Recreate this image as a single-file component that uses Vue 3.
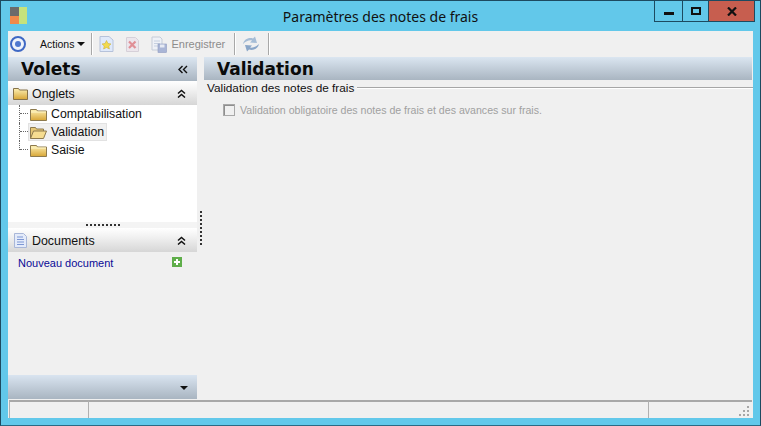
<script setup>
const rows = [
  { label: 'Comptabilisation', open: false },
  { label: 'Validation', open: true },
  { label: 'Saisie', open: false },
]
</script>

<template>
  <div class="window">
    <header class="titlebar">
      <svg class="appicon" width="17" height="17" viewBox="0 0 17 17">
        <rect x="0" y="0" width="9" height="9" fill="#6b6b6b" />
        <rect x="0" y="9" width="9" height="8" fill="#f08a4b" />
        <rect x="9" y="0" width="8" height="17" fill="#c6e27c" />
      </svg>
      <div class="title">Paramètres des notes de frais</div>
      <div class="winbtns">
        <div class="wb wb-min"><i></i></div>
        <div class="wb wb-max"><i></i></div>
        <div class="wb wb-close">
          <svg width="10" height="9" viewBox="0 0 10 9"><path d="M1 .5l8 8M9 .5l-8 8" stroke="#111" stroke-width="2.2" fill="none" /></svg>
        </div>
      </div>
    </header>

    <div class="client">
      <div class="toolbar">
        <svg class="tb-logo" width="18" height="18" viewBox="0 0 18 18">
          <circle cx="9" cy="9" r="7" fill="#eef3fb" stroke="#3f68c4" stroke-width="2" />
          <circle cx="9" cy="9" r="3" fill="#4f78cf" />
        </svg>
        <span class="actions">Actions</span>
        <span class="caret"></span>
        <span class="sep s1"></span>
        <svg class="t-new" width="15" height="16" viewBox="0 0 15 16">
          <path d="M1 .5h9l4 3.500v11.500H1z" fill="#dfe9fa" stroke="#b6c2da" />
          <path d="M7.500 4.500l1.500 3 3 .4-2.200 2.100.6 3-2.900-1.500-2.900 1.500.6-3L3 7.900l3-.4z" fill="#f2da4c" stroke="#c9a92c" stroke-width=".5" />
        </svg>
        <svg class="t-del" width="13" height="15" viewBox="0 0 13 15">
          <path d="M.5.500h9l3 3v11H.500z" fill="#ece6ec" stroke="#d6d0d8" />
          <path d="M3 4.500l6.500 6.500M9.500 4.500L3 11" stroke="#e08f96" stroke-width="2.200" />
        </svg>
        <svg class="t-save" width="16" height="17" viewBox="0 0 16 17">
          <path d="M1 1h8l2 2v11H1z" fill="#eef1f7" stroke="#c5ccd8" />
          <path d="M3 5h6M3 7.500h6M3 10h4" stroke="#c6d0e0" />
          <rect x="7" y="8" width="8.500" height="8.500" fill="#a9b5d6" stroke="#8f9cc0" stroke-width=".6" />
          <rect x="9" y="8.500" width="4.500" height="3" fill="#e6eaf3" />
        </svg>
        <span class="save">Enregistrer</span>
        <span class="sep s2"></span>
        <svg class="t-ref" width="18" height="18" viewBox="0 0 18 18">
          <path d="M1 9c1-4.500 5.500-7 10-5.500l2-2 2 6.500-7-.5 2-2c-3-.6-6 .8-9 3.500z" fill="#a6bdd6" />
          <path d="M17 9c-1 4.500-5.500 7-10 5.500l-2 2-2-6.500 7 .5-2 2c3 .6 6-.8 9-3.500z" fill="#8aa6c8" />
        </svg>
        <span class="sep s3"></span>
      </div>

      <div class="body">
        <aside class="side">
          <div class="bighead">
            <span class="bigtitle side-title">Volets</span>
            <svg class="dbl" width="10" height="9" viewBox="0 0 10 9"><path d="M4.500 1L1 4.500 4.500 8M9 1L5.500 4.500 9 8" fill="none" stroke="#111" stroke-width="1.400" /></svg>
          </div>

          <div class="sechead">
            <svg class="sec-ic" width="15" height="13" viewBox="0 0 15 13">
              <defs><linearGradient id="fa" x1="0" y1="0" x2="0" y2="1"><stop offset="0" stop-color="#fdf0b4" /><stop offset="1" stop-color="#d8a636" /></linearGradient></defs>
              <path d="M.5 1.500h5l1 1.500h8v9.500H.5z" fill="url(#fa)" stroke="#86724a" />
            </svg>
            <span class="sec-label">Onglets</span>
            <svg class="chev" width="9" height="9" viewBox="0 0 9 9"><path d="M1 4.500l3.500-3 3.500 3M1 8.500l3.500-3 3.500 3" fill="none" stroke="#111" stroke-width="1.500" /></svg>
          </div>

          <div class="tree">
            <div v-for="(r, i) in rows" :key="r.label" class="row">
              <span class="conn" :class="{ last: i === rows.length - 1 }"><i></i></span>
              <div class="node" :class="{ sel: r.open }">
                <svg v-if="!r.open" width="17" height="13" viewBox="0 0 17 13">
                  <path d="M.5 1.500h6l1 1.500h9v9.500H.5z" fill="url(#fa)" stroke="#8d7a4e" />
                  <path d="M1 4h15" stroke="#fff6c8" />
                </svg>
                <svg v-else width="17" height="13" viewBox="0 0 17 13">
                  <path d="M.5 12.500v-11h5l1 1.500h7v2" fill="#e6c877" stroke="#8d7a4e" />
                  <path d="M.5 12.500l3-7.500h13l-3 7.500z" fill="#f6dd91" stroke="#8d7a4e" />
                </svg>
                <span class="node-label">{{ r.label }}</span>
              </div>
            </div>
          </div>

          <div class="hgrip"><span></span></div>

          <div class="sechead">
            <svg class="sec-ic doc" width="13" height="15" viewBox="0 0 13 15">
              <path d="M.5.500h9l3 3v11H.500z" fill="#e4ebfa" stroke="#a9b7d8" />
              <path d="M3 4h6M3 6.500h7M3 9h7M3 11.500h7" stroke="#7d97d4" />
            </svg>
            <span class="sec-label">Documents</span>
            <svg class="chev" width="9" height="9" viewBox="0 0 9 9"><path d="M1 4.500l3.500-3 3.500 3M1 8.500l3.500-3 3.500 3" fill="none" stroke="#111" stroke-width="1.500" /></svg>
          </div>

          <div class="docs">
            <span class="doclink">Nouveau document</span>
            <svg width="10" height="10" viewBox="0 0 10 10">
              <rect width="10" height="10" fill="#5fae4a" />
              <path d="M5 2v6M2 5h6" stroke="#fff" stroke-width="2" />
            </svg>
          </div>

          <div class="sidefoot"><span class="caret footcaret"></span></div>
        </aside>

        <div class="vgrip"><span></span></div>

        <main class="main">
          <div class="bighead mainhead">
            <span class="bigtitle">Validation</span>
          </div>
          <div class="group">
            <span class="group-label">Validation des notes de frais</span>
            <span class="group-line"></span>
          </div>
          <label class="check">
            <span class="box"></span>
            <span>Validation obligatoire des notes de frais et des avances sur frais.</span>
          </label>
        </main>
      </div>

      <footer class="status">
        <div class="cell c1"></div>
        <div class="cell c2"></div>
        <div class="cell c3">
          <svg width="11" height="11" viewBox="0 0 11 11" fill="#a6a6a6">
            <rect x="8" y="0" width="2" height="2" /><rect x="4" y="4" width="2" height="2" /><rect x="8" y="4" width="2" height="2" />
            <rect x="0" y="8" width="2" height="2" /><rect x="4" y="8" width="2" height="2" /><rect x="8" y="8" width="2" height="2" />
          </svg>
        </div>
      </footer>
    </div>
  </div>
</template>

<style>
html, body { margin: 0; padding: 0; }
</style>

<style scoped>
.window {
  width: 761px; height: 426px; box-sizing: border-box;
  background: #62c8ea; border: 1px solid #1d4a60; border-bottom-color: #2a6a84;
  display: flex; flex-direction: column; overflow: hidden;
  font-family: "Liberation Sans", sans-serif; color: #111;
}
.titlebar { height: 30px; flex: none; display: flex; align-items: flex-start; padding-left: 9px; }
.appicon { margin-top: 6px; flex: none; }
.title { position: absolute; left: 0; width: 761px; top: 7px; text-align: center; font-family: "Noto Sans", sans-serif; font-size: 14px; line-height: 20px; color: #111; }
.winbtns { margin-left: auto; margin-right: 5px; display: flex; height: 21px; border: 1px solid #1d4a60; border-top: 0; box-sizing: border-box; position: relative; }
.wb { display: flex; align-items: center; justify-content: center; height: 20px; box-sizing: border-box; }
.wb-min { width: 28px; border-right: 1px solid #1d4a60; }
.wb-min i { width: 10px; height: 3px; background: #111; margin-top: 5px; }
.wb-max { width: 26px; border-right: 1px solid #1d4a60; }
.wb-max i { width: 6px; height: 4px; border: 2px solid #111; }
.wb-close { width: 45px; background: #c75e4f; }

.client { flex: 1; min-height: 0; margin: 0 7px 7px; background: #f0f0f0; display: flex; flex-direction: column; }
.toolbar { height: 26px; flex: none; display: flex; align-items: center; padding-left: 1px; font-size: 11px; }
.tb-logo { flex: none; }
.actions { margin-left: 13px; color: #111; font-size: 10.500px; }
.caret { width: 0; height: 0; border: 4px solid transparent; border-top: 4px solid #111; border-bottom: 0; margin-left: 3px; }
.sep { width: 1px; height: 22px; background: #a8a8a8; border-right: 1px solid #fff; flex: none; }
.s1 { margin-left: 6px; }
.t-new { margin-left: 6px; }
.t-del { margin-left: 12px; }
.t-save { margin-left: 12px; }
.save { margin-left: 4px; color: #8c8c8c; }
.s2 { margin-left: 9px; }
.t-ref { margin-left: 6px; }
.s3 { margin-left: 8px; }

.body { flex: 1; min-height: 0; display: flex; }
.side { width: 189px; flex: none; display: flex; flex-direction: column; }
.bighead {
  height: 24px; flex: none; display: flex; align-items: center; justify-content: space-between;
  background: linear-gradient(#dbe6f1, #a9b5c1);
}
.mainhead { height: 23px; }
.bigtitle { font-family: "DejaVu Sans", sans-serif; font-weight: 700; font-size: 17px; line-height: 22px; color: #0a0a0a; margin-left: 13px; }
.side-title { margin-left: 13px; }
.dbl { margin-right: 9px; }

.sechead { height: 24px; flex: none; display: flex; align-items: center; background: linear-gradient(#ffffff, #f2f2f2 35%, #d6d6d6); font-size: 12.400px; }
.sec-ic { margin-left: 5px; flex: none; }
.sec-ic.doc { margin-left: 6px; margin-right: 1px; }
.sec-label { margin-left: 4px; flex: 1; padding-top: 1px; }
.chev { margin-right: 11px; }

.tree { height: 117px; flex: none; background: #fff; font-size: 12.300px; box-sizing: border-box; }
.row { height: 18px; display: flex; align-items: center; padding-left: 11px; }
.conn { width: 9px; height: 18px; border-left: 1px dotted #666; flex: none; box-sizing: border-box; }
.conn.last { height: 9px; align-self: flex-start; }
.conn i { display: block; height: 9px; box-sizing: border-box; border-bottom: 1px dotted #666; }
.node { display: flex; align-items: center; gap: 4px; height: 18px; box-sizing: border-box; padding: 0 2px 0 1px; border: 1px solid transparent; }
.node.sel { background: #f0f0f0; border-color: #e2e2e2; }
.node-label { line-height: 16px; }

.hgrip { height: 6px; flex: none; display: flex; justify-content: center; align-items: flex-start; background: #f4f4f4; }
.hgrip span { width: 34px; height: 2px; margin-top: 2px; border-top: 2px dotted #333; box-sizing: border-box; }

.docs { height: 123px; flex: none; box-sizing: border-box; padding: 4px 15px 0 10px; display: flex; justify-content: space-between; align-items: flex-start; font-size: 11px; }
.doclink { color: #0a0a96; line-height: 14px; }
.docs svg { margin-top: 1px; }

.sidefoot { height: 24px; flex: none; background: linear-gradient(#d9e4f0, #a9b5c1); display: flex; align-items: center; justify-content: flex-end; padding-right: 9px; box-sizing: border-box; }
.footcaret { margin: 2px 0 0; }

.vgrip { width: 7px; flex: none; display: flex; justify-content: center; padding-top: 154px; box-sizing: border-box; }
.vgrip span { width: 0; height: 34px; border-left: 2px dotted #333; }

.main { flex: 1; min-width: 0; padding-right: 1px; }
.group { display: flex; align-items: center; margin: 0 -1px 0 3px; height: 16px; font-size: 11.800px; }
.group-label { line-height: 16px; margin-top: -1px; }
.group-line { flex: 1; height: 1px; background: #a6a6a6; border-bottom: 1px solid #fff; margin-left: 3px; }
.check { display: flex; align-items: center; margin: 6px 0 0 19px; font-size: 10.600px; color: #a0a0a0; gap: 5px; line-height: 16px; }
.box { width: 10px; height: 10px; border: 1px solid #a8a8a8; background: #f0f0f0; box-shadow: inset 1px 1px 0 #8e8e8e; flex: none; }

.status { height: 19px; flex: none; display: flex; box-sizing: border-box; padding: 1px 1px 0 1px; }
.cell { height: 18px; border-top: 2px solid #a8a8a8; border-left: 1px solid #b0b0b0; box-sizing: border-box; background: #f0f0f0; }
.c1 { width: 79px; }
.c2 { flex: 1; }
.c3 { width: 104px; display: flex; justify-content: flex-end; align-items: flex-end; padding: 0 2px 1px 0; }
</style>
